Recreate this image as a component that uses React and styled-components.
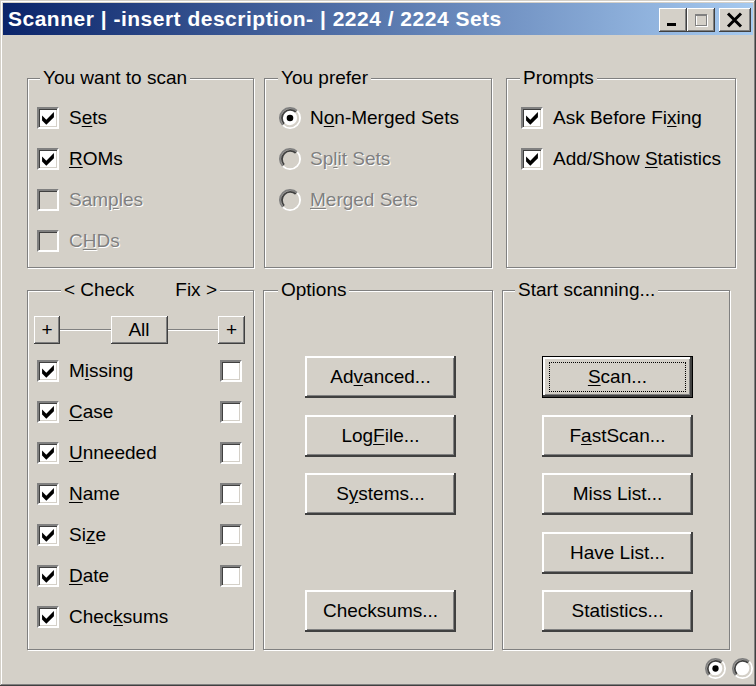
import React from 'react';
import styled, { createGlobalStyle } from 'styled-components';

const Global = createGlobalStyle`
  html, body { margin: 0; padding: 0; background: #d4d0c8; }
  body { font-family: "Liberation Sans", Arial, sans-serif; }
`;

const Window = styled.div`
  width: 756px;
  height: 686px;
  box-sizing: border-box;
  padding: 3px;
  overflow: hidden;
  background: #d4d0c8;
  box-shadow: inset -1px -1px 0 #404040, inset 1px 1px 0 #d4d0c8,
    inset -2px -2px 0 #808080, inset 2px 2px 0 #fff;
  display: flex;
  flex-direction: column;
  font-family: "Liberation Sans", Arial, sans-serif;
  font-size: 19px;
  color: #000;
`;

const TitleBar = styled.div`
  height: 32px;
  flex: none;
  display: flex;
  align-items: center;
  padding: 0 2px 0 5px;
  background: linear-gradient(to right, #0a246a, #a6caf0);
`;

const Title = styled.div`
  flex: 1;
  color: #fff;
  font-weight: bold;
  font-size: 21px;
  letter-spacing: 0.5px;
  white-space: nowrap;
`;

const CaptionButton = styled.span`
  width: ${p => p.$w || 28}px;
  height: 24px;
  margin-top: 2px;
  margin-left: ${p => p.$gap || 0}px;
  flex: none;
  display: flex;
  background: #d4d0c8;
  box-shadow: inset -1px -1px 0 #404040, inset 1px 1px 0 #fff,
    inset -2px -2px 0 #808080;
`;

const Content = styled.div`
  flex: 1;
  display: flex;
  flex-direction: column;
  padding: 43px 0 0 24px;
`;

const Row = styled.div`
  display: flex;
  height: ${p => p.$h}px;
  margin-top: ${p => p.$mt || 0}px;
  flex: none;
`;

const Group = styled.div`
  position: relative;
  box-sizing: border-box;
  width: ${p => p.$w}px;
  margin-left: ${p => p.$ml || 0}px;
  border: 1px solid #808080;
  box-shadow: inset 1px 1px 0 #fff, 1px 1px 0 #fff;
  padding: ${p => p.$pt ?? 18}px ${p => p.$pr || 0}px 0 ${p => p.$pl || 0}px;
  display: flex;
  flex-direction: column;
`;

const GroupLabel = styled.span`
  position: absolute;
  top: -12px;
  left: ${p => p.$left}px;
  height: 22px;
  line-height: 22px;
  padding: 0 3px;
  background: #d4d0c8;
  white-space: nowrap;
  display: flex;
  justify-content: space-between;
  width: ${p => (p.$width ? `${p.$width}px` : 'auto')};
  box-sizing: border-box;
`;

const OptionRow = styled.div`
  height: 41px;
  flex: none;
  display: flex;
  align-items: center;
  gap: ${p => p.$gap ?? 10}px;
`;

const Text = styled.span`
  white-space: nowrap;
  color: ${p => (p.$disabled ? '#808080' : '#000')};
  text-shadow: ${p => (p.$disabled ? '1px 1px 0 #fff' : 'none')};
`;

const U = styled.u`
  text-underline-offset: 2px;
`;

const Box = styled.span`
  width: 22px;
  height: 22px;
  box-sizing: border-box;
  flex: none;
  display: inline-flex;
  align-items: center;
  justify-content: center;
  margin-left: ${p => (p.$right ? 'auto' : '0')};
  background: ${p => (p.$disabled ? '#d4d0c8' : '#fff')};
  border: 2px solid;
  border-color: #808080 #fff #fff #808080;
  box-shadow: inset 1px 1px 0 #404040, inset -1px -1px 0 #d4d0c8;
`;

const RadioSvg = styled.svg`
  flex: none;
  display: block;
`;

const ToolRow = styled.div`
  height: 41px;
  flex: none;
  display: flex;
  align-items: center;
  margin: 0 -11px 0 -9px;
  padding: 0 8px 0 6px;
`;

const SmallButton = styled.span`
  width: ${p => p.$w}px;
  height: 28px;
  flex: none;
  box-sizing: border-box;
  display: flex;
  align-items: center;
  justify-content: center;
  background: #d4d0c8;
  box-shadow: inset -1px -1px 0 #404040, inset 1px 1px 0 #fff,
    inset -2px -2px 0 #808080;
`;

const EtchedLine = styled.span`
  flex: 1;
  height: 0;
  border-top: 1px solid #808080;
  border-bottom: 1px solid #fff;
`;

const ButtonStack = styled.div`
  display: flex;
  flex-direction: column;
  gap: 16.5px;
  padding-top: 65px;
  padding-left: ${p => p.$pl}px;
`;

const PushButton = styled.button`
  width: 151px;
  height: 42px;
  box-sizing: border-box;
  margin: ${p => (p.$skip ? '58.5px' : '0')} 0 0 0;
  padding: 0;
  font: inherit;
  color: #000;
  background: #d4d0c8;
  border: ${p => (p.$default ? '1px solid #000' : 'none')};
  box-shadow: inset -2px -2px 0 #404040, inset 2px 2px 0 #fff,
    inset -3px -3px 0 #808080;
  display: flex;
  align-items: center;
  justify-content: center;
`;

const FocusRing = styled.span`
  flex: 1;
  align-self: stretch;
  margin: 5px 6px;
  border: 1px dotted #000;
  display: flex;
  align-items: center;
  justify-content: center;
`;

const Footer = styled.div`
  display: flex;
  justify-content: flex-end;
  gap: 6px;
  margin-top: 8px;
`;

const CheckMark = () => (
  <svg width="18" height="18" viewBox="0 0 18 18">
    <polygon
      points="3.08,6.46 7.31,10.69 14.92,3.08 14.92,8.15 7.31,15.77 3.08,11.54"
      fill="#000"
    />
  </svg>
);

const CheckBox = ({ checked, disabled, right }) => (
  <Box $disabled={disabled} $right={right}>
    {checked && <CheckMark />}
  </Box>
);

const Radio = ({ checked, disabled, size = 22 }) => (
  <RadioSvg width={size} height={size} viewBox="0 0 24 24">
    <circle cx="12" cy="12" r="8.6" fill={disabled ? '#d4d0c8' : '#fff'} />
    <path d="M4.22 19.78A11 11 0 0 1 19.78 4.22" stroke="#808080" strokeWidth="2" fill="none" />
    <path d="M19.78 4.22A11 11 0 0 1 4.22 19.78" stroke="#fff" strokeWidth="2" fill="none" />
    <path d="M5.64 18.36A9 9 0 0 1 18.36 5.64" stroke="#404040" strokeWidth="2" fill="none" />
    <path d="M18.36 5.64A9 9 0 0 1 5.64 18.36" stroke="#d4d0c8" strokeWidth="2" fill="none" />
    {checked && <circle cx="12" cy="12" r="3.6" fill="#000" />}
  </RadioSvg>
);

const CheckOption = ({ checked, disabled, children }) => (
  <OptionRow>
    <CheckBox checked={checked} disabled={disabled} />
    <Text $disabled={disabled}>{children}</Text>
  </OptionRow>
);

const RadioOption = ({ checked, disabled, children }) => (
  <OptionRow $gap={9}>
    <Radio checked={checked} disabled={disabled} />
    <Text $disabled={disabled}>{children}</Text>
  </OptionRow>
);

const FixRow = ({ children }) => (
  <OptionRow>
    <CheckBox checked />
    <Text>{children}</Text>
    <CheckBox right />
  </OptionRow>
);

const MinGlyph = () => (
  <svg width="28" height="24" viewBox="0 0 28 24">
    <rect x="8" y="15" width="9" height="3" fill="#000" />
  </svg>
);

const MaxGlyph = () => (
  <svg width="28" height="24" viewBox="0 0 28 24">
    <rect x="9.5" y="7.5" width="11" height="11" fill="none" stroke="#fff" strokeWidth="1" />
    <rect x="8.5" y="6.5" width="11" height="11" fill="none" stroke="#808080" strokeWidth="1" />
    <rect x="8" y="6" width="12" height="2" fill="#808080" />
  </svg>
);

const CloseGlyph = () => (
  <svg width="32" height="24" viewBox="0 0 32 24">
    <path d="M9 5.5 L22 18.5 M22 5.5 L9 18.5" stroke="#000" strokeWidth="3" />
  </svg>
);

export default function App() {
  return (
    <>
      <Global />
      <Window>
        <TitleBar>
          <Title>Scanner | -insert description- | 2224 / 2224 Sets</Title>
          <CaptionButton><MinGlyph /></CaptionButton>
          <CaptionButton><MaxGlyph /></CaptionButton>
          <CaptionButton $gap={4} $w={32}><CloseGlyph /></CaptionButton>
        </TitleBar>

        <Content>
          <Row $h={190}>
            <Group $w={227} $pl={9}>
              <GroupLabel $left={12}>You want to scan</GroupLabel>
              <CheckOption checked>S<U>e</U>ts</CheckOption>
              <CheckOption checked><U>R</U>OMs</CheckOption>
              <CheckOption disabled>Sam<U>p</U>les</CheckOption>
              <CheckOption disabled>C<U>H</U>Ds</CheckOption>
            </Group>

            <Group $w={228} $ml={10} $pl={14}>
              <GroupLabel $left={13}>You prefer</GroupLabel>
              <RadioOption checked>N<U>o</U>n-Merged Sets</RadioOption>
              <RadioOption disabled>Sp<U>l</U>it Sets</RadioOption>
              <RadioOption disabled><U>M</U>erged Sets</RadioOption>
            </Group>

            <Group $w={230} $ml={14} $pl={14}>
              <GroupLabel $left={13}>Prompts</GroupLabel>
              <CheckOption checked>Ask Before Fi<U>x</U>ing</CheckOption>
              <CheckOption checked>Add/Show <U>S</U>tatistics</CheckOption>
            </Group>
          </Row>

          <Row $h={360} $mt={22}>
            <Group $w={227} $pl={9} $pr={11}>
              <GroupLabel $left={33} $width={159}>
                <span>&lt; Check</span>
                <span>Fix &gt;</span>
              </GroupLabel>
              <ToolRow>
                <SmallButton $w={26}>+</SmallButton>
                <EtchedLine />
                <SmallButton $w={57}>All</SmallButton>
                <EtchedLine />
                <SmallButton $w={27}>+</SmallButton>
              </ToolRow>
              <FixRow>M<U>i</U>ssing</FixRow>
              <FixRow><U>C</U>ase</FixRow>
              <FixRow><U>U</U>nneeded</FixRow>
              <FixRow><U>N</U>ame</FixRow>
              <FixRow>Si<U>z</U>e</FixRow>
              <FixRow><U>D</U>ate</FixRow>
              <CheckOption checked>Chec<U>k</U>sums</CheckOption>
            </Group>

            <Group $w={230} $ml={9} $pt={0}>
              <GroupLabel $left={14}>Options</GroupLabel>
              <ButtonStack $pl={41}>
                <PushButton>Ad<U>v</U>anced...</PushButton>
                <PushButton>Log<U>F</U>ile...</PushButton>
                <PushButton>S<U>y</U>stems...</PushButton>
                <PushButton $skip>Checksums...</PushButton>
              </ButtonStack>
            </Group>

            <Group $w={228} $ml={9} $pt={0}>
              <GroupLabel $left={12}>Start scanning...</GroupLabel>
              <ButtonStack $pl={39}>
                <PushButton $default>
                  <FocusRing><U>S</U>can...</FocusRing>
                </PushButton>
                <PushButton>F<U>a</U>stScan...</PushButton>
                <PushButton>Miss List...</PushButton>
                <PushButton>Have List...</PushButton>
                <PushButton>Statistics...</PushButton>
              </ButtonStack>
            </Group>
          </Row>

          <Footer>
            <Radio checked size={21} />
            <Radio size={21} />
          </Footer>
        </Content>
      </Window>
    </>
  );
}
